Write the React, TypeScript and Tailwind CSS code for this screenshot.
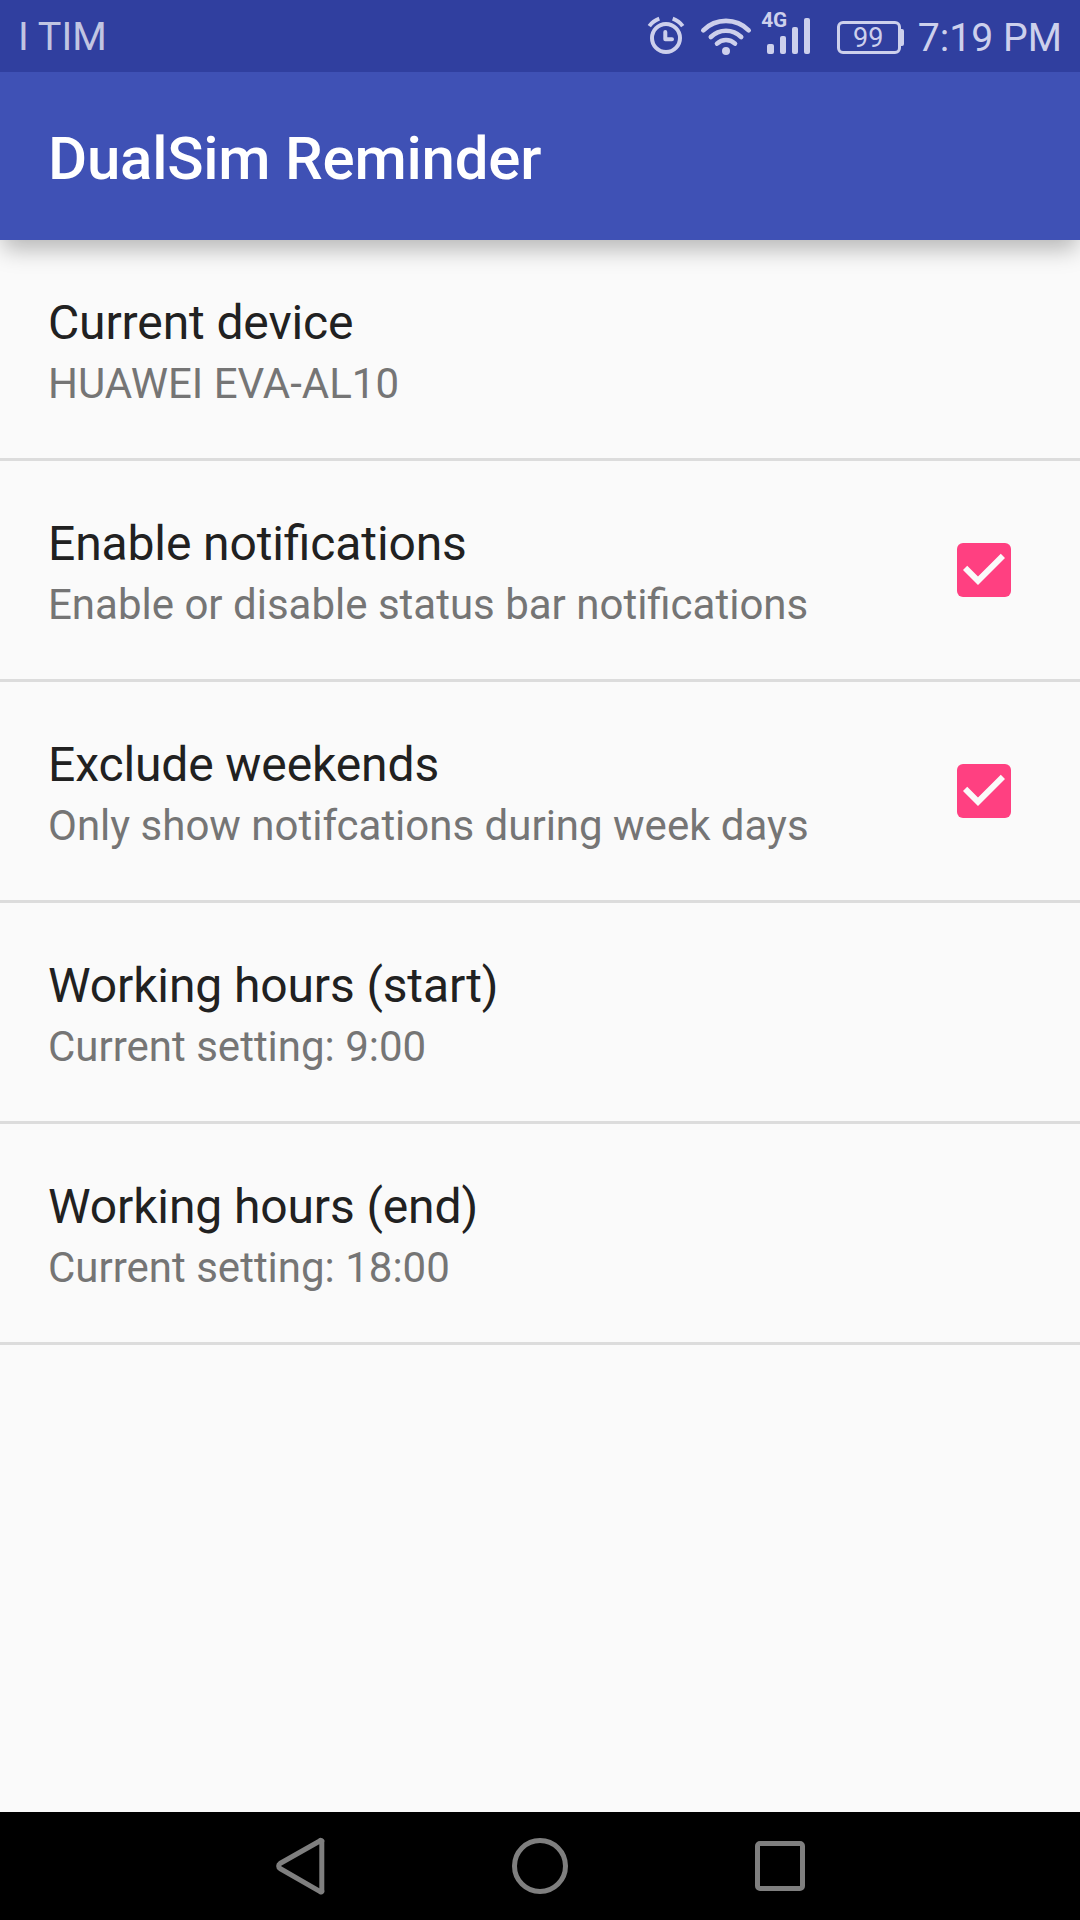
import React from "react";

type Preference = { title: string; summary: string; checked?: boolean };

const preferences: Preference[] = [
  { title: "Current device", summary: "HUAWEI EVA-AL10" },
  { title: "Enable notifications", summary: "Enable or disable status bar notifications", checked: true },
  { title: "Exclude weekends", summary: "Only show notifcations during week days", checked: true },
  { title: "Working hours (start)", summary: "Current setting: 9:00" },
  { title: "Working hours (end)", summary: "Current setting: 18:00" },
];

function AlarmIcon() {
  return (
    <svg width="38" height="40" viewBox="647 16 38 40" fill="none" stroke="currentColor" strokeWidth="4">
      <circle cx="666" cy="38" r="14" />
      <path d="M665.3 32v7.2h6.7" strokeLinecap="round" strokeLinejoin="round" />
      <path d="M649.3 26.2A21 21 0 0 1 659.3 18.7M682.7 26.2A21 21 0 0 0 672.7 18.7" />
    </svg>
  );
}

function WifiIcon() {
  return (
    <svg width="52" height="40" viewBox="700 16 52 40" fill="none" stroke="currentColor" strokeWidth="4.6" strokeLinecap="round">
      <path d="M703.3 30.3A32 32 0 0 1 748.7 30.3" />
      <path d="M710.8 37A21.5 21.5 0 0 1 741.2 37" />
      <path d="M717 43.6A13 13 0 0 1 735 43.6" />
      <circle cx="726" cy="51" r="4" fill="currentColor" stroke="none" />
    </svg>
  );
}

function SignalIcon() {
  return (
    <svg width="44" height="38" viewBox="767 17 44 38" fill="currentColor">
      <rect x="767" y="44" width="7" height="10" rx="2" />
      <rect x="780" y="36" width="6" height="18" rx="2" />
      <rect x="792" y="27" width="6" height="27" rx="2" />
      <rect x="804" y="18" width="6" height="36" rx="2" />
    </svg>
  );
}

function StatusBar() {
  return (
    <header className="relative z-20 flex h-[72px] items-start bg-[#303f9f] text-[#cdd0ec]">
      <span className="ml-[18px] mt-[14px] text-[39.6px] leading-[46px] text-[#c1c5e2]">I TIM</span>
      <div className="ml-auto mr-[18px] flex items-start">
        <div className="mt-4"><AlarmIcon /></div>
        <div className="ml-[15px] mt-4"><WifiIcon /></div>
        <div className="relative ml-[15px] mt-[17px]">
          <SignalIcon />
          <span className="absolute -left-[6px] -top-[9px] text-[20.8px] font-bold leading-[24px]">4G</span>
        </div>
        <div className="ml-[26px] mt-[21px] flex items-center">
          <div className="flex h-[33px] w-[64px] items-center justify-center rounded-[6px] border-3 border-current text-[27px] leading-[27px]">
            <span className="-ml-0.5 mt-px">99</span>
          </div>
          <div className="h-[17px] w-[3px] rounded-r-[2px] bg-current" />
        </div>
        <span className="ml-[13.6px] mt-[15px] whitespace-nowrap text-[39.2px] leading-[46px]">7:19 PM</span>
      </div>
    </header>
  );
}

function CheckedBox() {
  return (
    <div className="mr-[69px] mt-[82px] size-[54px] shrink-0 rounded-[6px] bg-[#ff4081]">
      <svg viewBox="3 3 18 18" className="size-full" fill="#fafafa">
        <path d="M10 17 5 12l1.41-1.41L10 14.17l7.59-7.59L19 8z" />
      </svg>
    </div>
  );
}

function PreferenceRow({ title, summary, checked }: Preference) {
  return (
    <li className="flex h-[221px] items-start justify-between border-b-3 border-[#dcdcdc]">
      <div className="ml-12 mt-[55px] whitespace-nowrap">
        <div className="text-5xl leading-[56px] tracking-[-0.12px] text-[#212121] [font-feature-settings:'liga'_1]">{title}</div>
        <div className="mt-[8px] text-[42px] leading-[49px] text-[#757575]">{summary}</div>
      </div>
      {checked && <CheckedBox />}
    </li>
  );
}

function NavigationBar() {
  return (
    <nav className="flex h-[108px] items-center justify-center bg-black text-[#7f7f7f]">
      <svg width="60" height="60" viewBox="269.5 1836 60 60" fill="none" stroke="currentColor" strokeWidth="5" strokeLinejoin="round" className="mr-[182px]">
        <path d="M321.3 1842v48.4a1 1 0 0 1-2 1L279.5 1868.5a3 3 0 0 1 0-5L319.3 1841a1 1 0 0 1 2 1z" />
      </svg>
      <svg width="56" height="56" viewBox="0 0 56 56" fill="none" stroke="currentColor" strokeWidth="5">
        <circle cx="28" cy="28" r="25.5" />
      </svg>
      <svg width="50" height="50" viewBox="0 0 50 50" fill="none" stroke="currentColor" strokeWidth="5" className="ml-[187px] mr-[5px]">
        <rect x="2.5" y="2.5" width="45" height="45" rx="2.5" />
      </svg>
    </nav>
  );
}

export default function App() {
  return (
    <div className="flex h-[1920px] w-[1080px] flex-col overflow-hidden bg-[#fafafa] font-[Roboto,sans-serif]">
      <StatusBar />
      <div className="z-10 flex h-[168px] items-start bg-[#3f51b5] shadow-[0_12px_22px_-3px_rgba(0,0,0,0.28)]">
        <h1 className="ml-12 mt-[52px] text-6xl font-medium leading-[70px] tracking-[-0.24px] text-white">DualSim Reminder</h1>
      </div>
      <ul className="flex-1">
        {preferences.map((item) => (
          <PreferenceRow key={item.title} {...item} />
        ))}
      </ul>
      <NavigationBar />
    </div>
  );
}
